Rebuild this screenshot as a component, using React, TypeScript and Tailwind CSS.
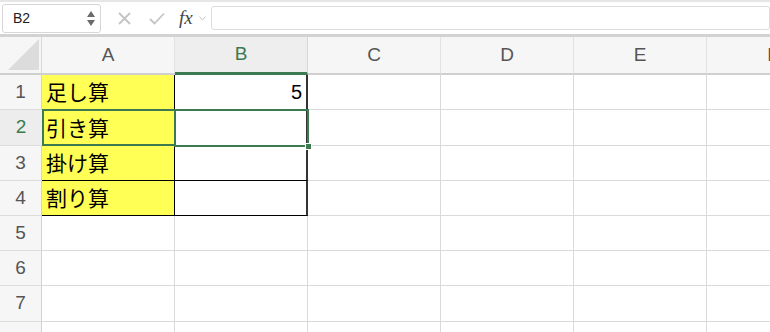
import React from 'react';

const COLS = ['A', 'B', 'C', 'D', 'E', 'F'];
const ROW_H = [35, 36, 35, 35, 35, 35, 36, 35];
const LABELS = ['足し算', '引き算', '掛け算', '割り算'];

const font = { fontFamily: '"Liberation Sans", "Noto Sans CJK JP", sans-serif' };

export default function App() {
  return (
    <div className="relative w-[770px] h-[332px] overflow-hidden bg-white" style={font}>
      {/* Formula bar */}
      <div className="h-[37px] border-t-[2px] border-[#e6e6e6] border-b-[3px] border-b-[#d2d2d2] flex items-center bg-white">
        <div className="ml-[2px] w-[99px] h-[29px] border border-[#d6d6d6] rounded-[3px] flex items-center justify-between pl-[10px] pr-[5px]">
          <span className="text-[14px] text-[#222]">B2</span>
          <div className="flex flex-col items-center gap-[3px]">
            <svg width="8" height="6" viewBox="0 0 8 6"><path d="M4 0 L8 6 L0 6 Z" fill="#6b6b6b" /></svg>
            <svg width="8" height="6" viewBox="0 0 8 6"><path d="M0 0 L8 0 L4 6 Z" fill="#6b6b6b" /></svg>
          </div>
        </div>
        <div className="flex items-center ml-[17px] gap-[18px]">
          <svg width="13" height="13" viewBox="0 0 13 13">
            <path d="M1 1 L12 12 M12 1 L1 12" stroke="#c4c4c4" strokeWidth="1.8" />
          </svg>
          <svg width="16" height="13" viewBox="0 0 16 13">
            <path d="M1 7 L5.5 11.5 L15 1.5" stroke="#c4c4c4" strokeWidth="1.8" fill="none" />
          </svg>
        </div>
        <span className="ml-[14px] text-[19px] italic text-[#444]" style={{ fontFamily: '"Liberation Serif", serif' }}>
          fx
        </span>
        <svg className="ml-[6px]" width="7" height="5" viewBox="0 0 7 5">
          <path d="M0.5 0.5 L3.5 4 L6.5 0.5" stroke="#c4c4c4" strokeWidth="1" fill="none" />
        </svg>
        <div className="ml-[5px] flex-1 h-[24px] border border-[#dcdcdc] rounded-[3px]" />
      </div>

      {/* Column headers */}
      <div className="flex h-[38px] bg-[#f6f6f6]">
        <div className="relative w-[42px] shrink-0 border-r border-[#d8d8d8] border-b-2 border-b-[#cfcfcf]">
          <svg className="absolute right-[2px] bottom-[3px]" width="31" height="31" viewBox="0 0 31 31">
            <path d="M31 0 L31 31 L0 31 Z" fill="#dcdcdc" />
          </svg>
        </div>
        {COLS.map((c) => (
          <div
            key={c}
            className={
              c === 'B'
                ? 'w-[133px] shrink-0 flex items-center justify-center text-[19px] text-[#3a7a50] bg-[#eeeeee] border-r border-[#d8d8d8] border-b-[3px] border-b-[#3d7a52]'
                : 'w-[133px] shrink-0 flex items-center justify-center text-[19px] text-[#555] border-r border-[#e2e2e2] border-b-2 border-b-[#cfcfcf]'
            }
          >
            {c}
          </div>
        ))}
      </div>

      {/* Rows */}
      {ROW_H.map((h, i) => {
        const inTable = i < 4;
        return (
          <div key={i} className="flex" style={{ height: h }}>
            <div
              className={
                i === 1
                  ? 'w-[42px] shrink-0 flex items-center justify-center text-[19px] text-[#3a7a50] bg-[#ededed] border-b border-[#dcdcdc]'
                  : 'w-[42px] shrink-0 flex items-center justify-center text-[19px] text-[#555] bg-[#f6f6f6] border-r border-[#d2d2d2] border-b border-b-[#dcdcdc]'
              }
            >
              {i + 1}
            </div>
            {COLS.map((c, j) => {
              if (inTable && j === 0) {
                return (
                  <div
                    key={c}
                    className="w-[133px] shrink-0 bg-[#ffff55] border-r border-black border-b border-b-black flex items-center pl-[4px] text-[21px] text-black"
                    style={{ fontFamily: '"Noto Sans CJK JP", sans-serif' }}
                  >
                    {LABELS[i]}
                  </div>
                );
              }
              if (inTable && j === 1) {
                return (
                  <div
                    key={c}
                    className="w-[133px] shrink-0 border-r-2 border-[#333] border-b border-b-black flex items-center justify-end pr-[4px] text-[20px] text-black"
                  >
                    {i === 0 ? '5' : ''}
                  </div>
                );
              }
              return <div key={c} className="w-[133px] shrink-0 border-r border-[#dadada] border-b border-b-[#dadada]" />;
            })}
          </div>
        );
      })}

      {/* A2 outline */}
      <div className="absolute left-[42px] top-[109px] w-[133px] h-[37px] border-2 border-r-0 border-[#3d7a52]" />
      {/* Active cell B2 */}
      <div className="absolute left-[174px] top-[109px] w-[135px] h-[38px] border-2 border-[#3d7a52]" />
      <div className="absolute left-[305px] top-[143px] w-[7px] h-[7px] bg-[#3d7a52] border border-white" />
    </div>
  );
}
